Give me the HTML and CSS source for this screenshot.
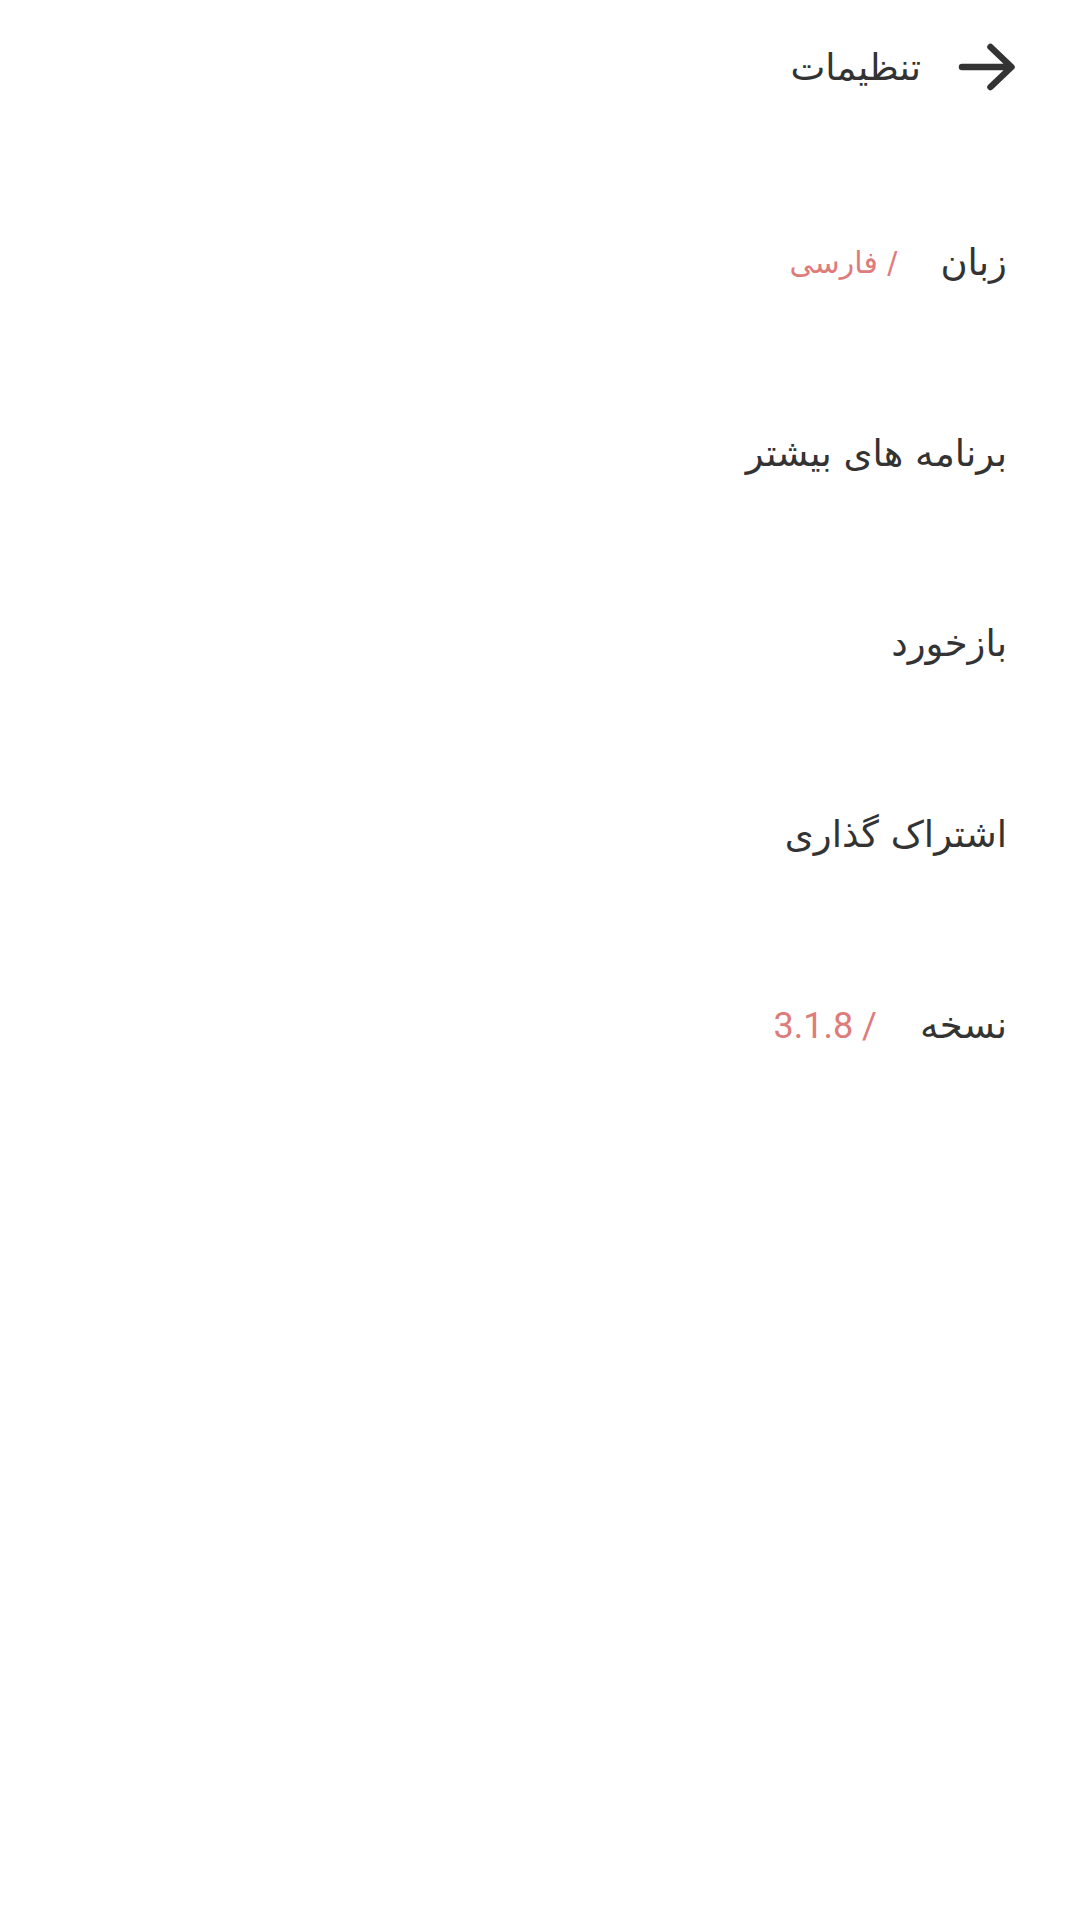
FILE: index.html
```html
<!DOCTYPE html>
<html lang="fa" dir="rtl">
<head>
<meta charset="utf-8">
<link rel="stylesheet" href="styles.css">
</head>
<body>
<div class="screen">
  <header class="topbar">
    <svg class="back" width="60" height="52" viewBox="0 0 60 52" aria-hidden="true">
      <path d="M5 26 H54 M33.5 6 L54.5 26 L33.5 46" fill="none" stroke="#333333" stroke-width="6.5" stroke-linecap="round" stroke-linejoin="round"/>
    </svg>
    <h1 class="title">تنظیمات</h1>
  </header>
  <ul class="list">
    <li class="row"><span class="label">زبان</span><span class="value">/ فارسی</span></li>
    <li class="row"><span class="label">برنامه های بیشتر</span></li>
    <li class="row"><span class="label">بازخورد</span></li>
    <li class="row"><span class="label">اشتراک گذاری</span></li>
    <li class="row"><span class="label">نسخه</span><span class="value num">/ 3.1.8</span></li>
  </ul>
</div>
</body>
</html>
```

FILE: styles.css
```css
html, body {
  margin: 0;
  padding: 0;
  background: #ffffff;
}
body {
  font-family: "DejaVu Sans", "Noto Sans", sans-serif;
  color: #333333;
  width: 1080px;
  height: 1920px;
}
.screen {
  direction: rtl;
}
.topbar {
  display: flex;
  align-items: center;
  height: 134px;
  padding-right: 63px;
  gap: 36px;
  box-sizing: border-box;
}
.back {
  display: block;
  flex: none;
}
.title {
  margin: 0;
  font-size: 37px;
  font-weight: normal;
  color: #333333;
}
.list {
  list-style: none;
  margin: 0;
  padding: 33px 0 0 0;
}
.row {
  display: flex;
  align-items: center;
  height: 190.8px;
  padding-right: 73px;
  gap: 43px;
  font-size: 37px;
}
.label {
  color: #333333;
}
.value {
  color: #de7b7b;
  font-size: 30px;
}
.value.num {
  font-family: "Roboto", "DejaVu Sans", sans-serif;
  font-size: 36px;
}
```
